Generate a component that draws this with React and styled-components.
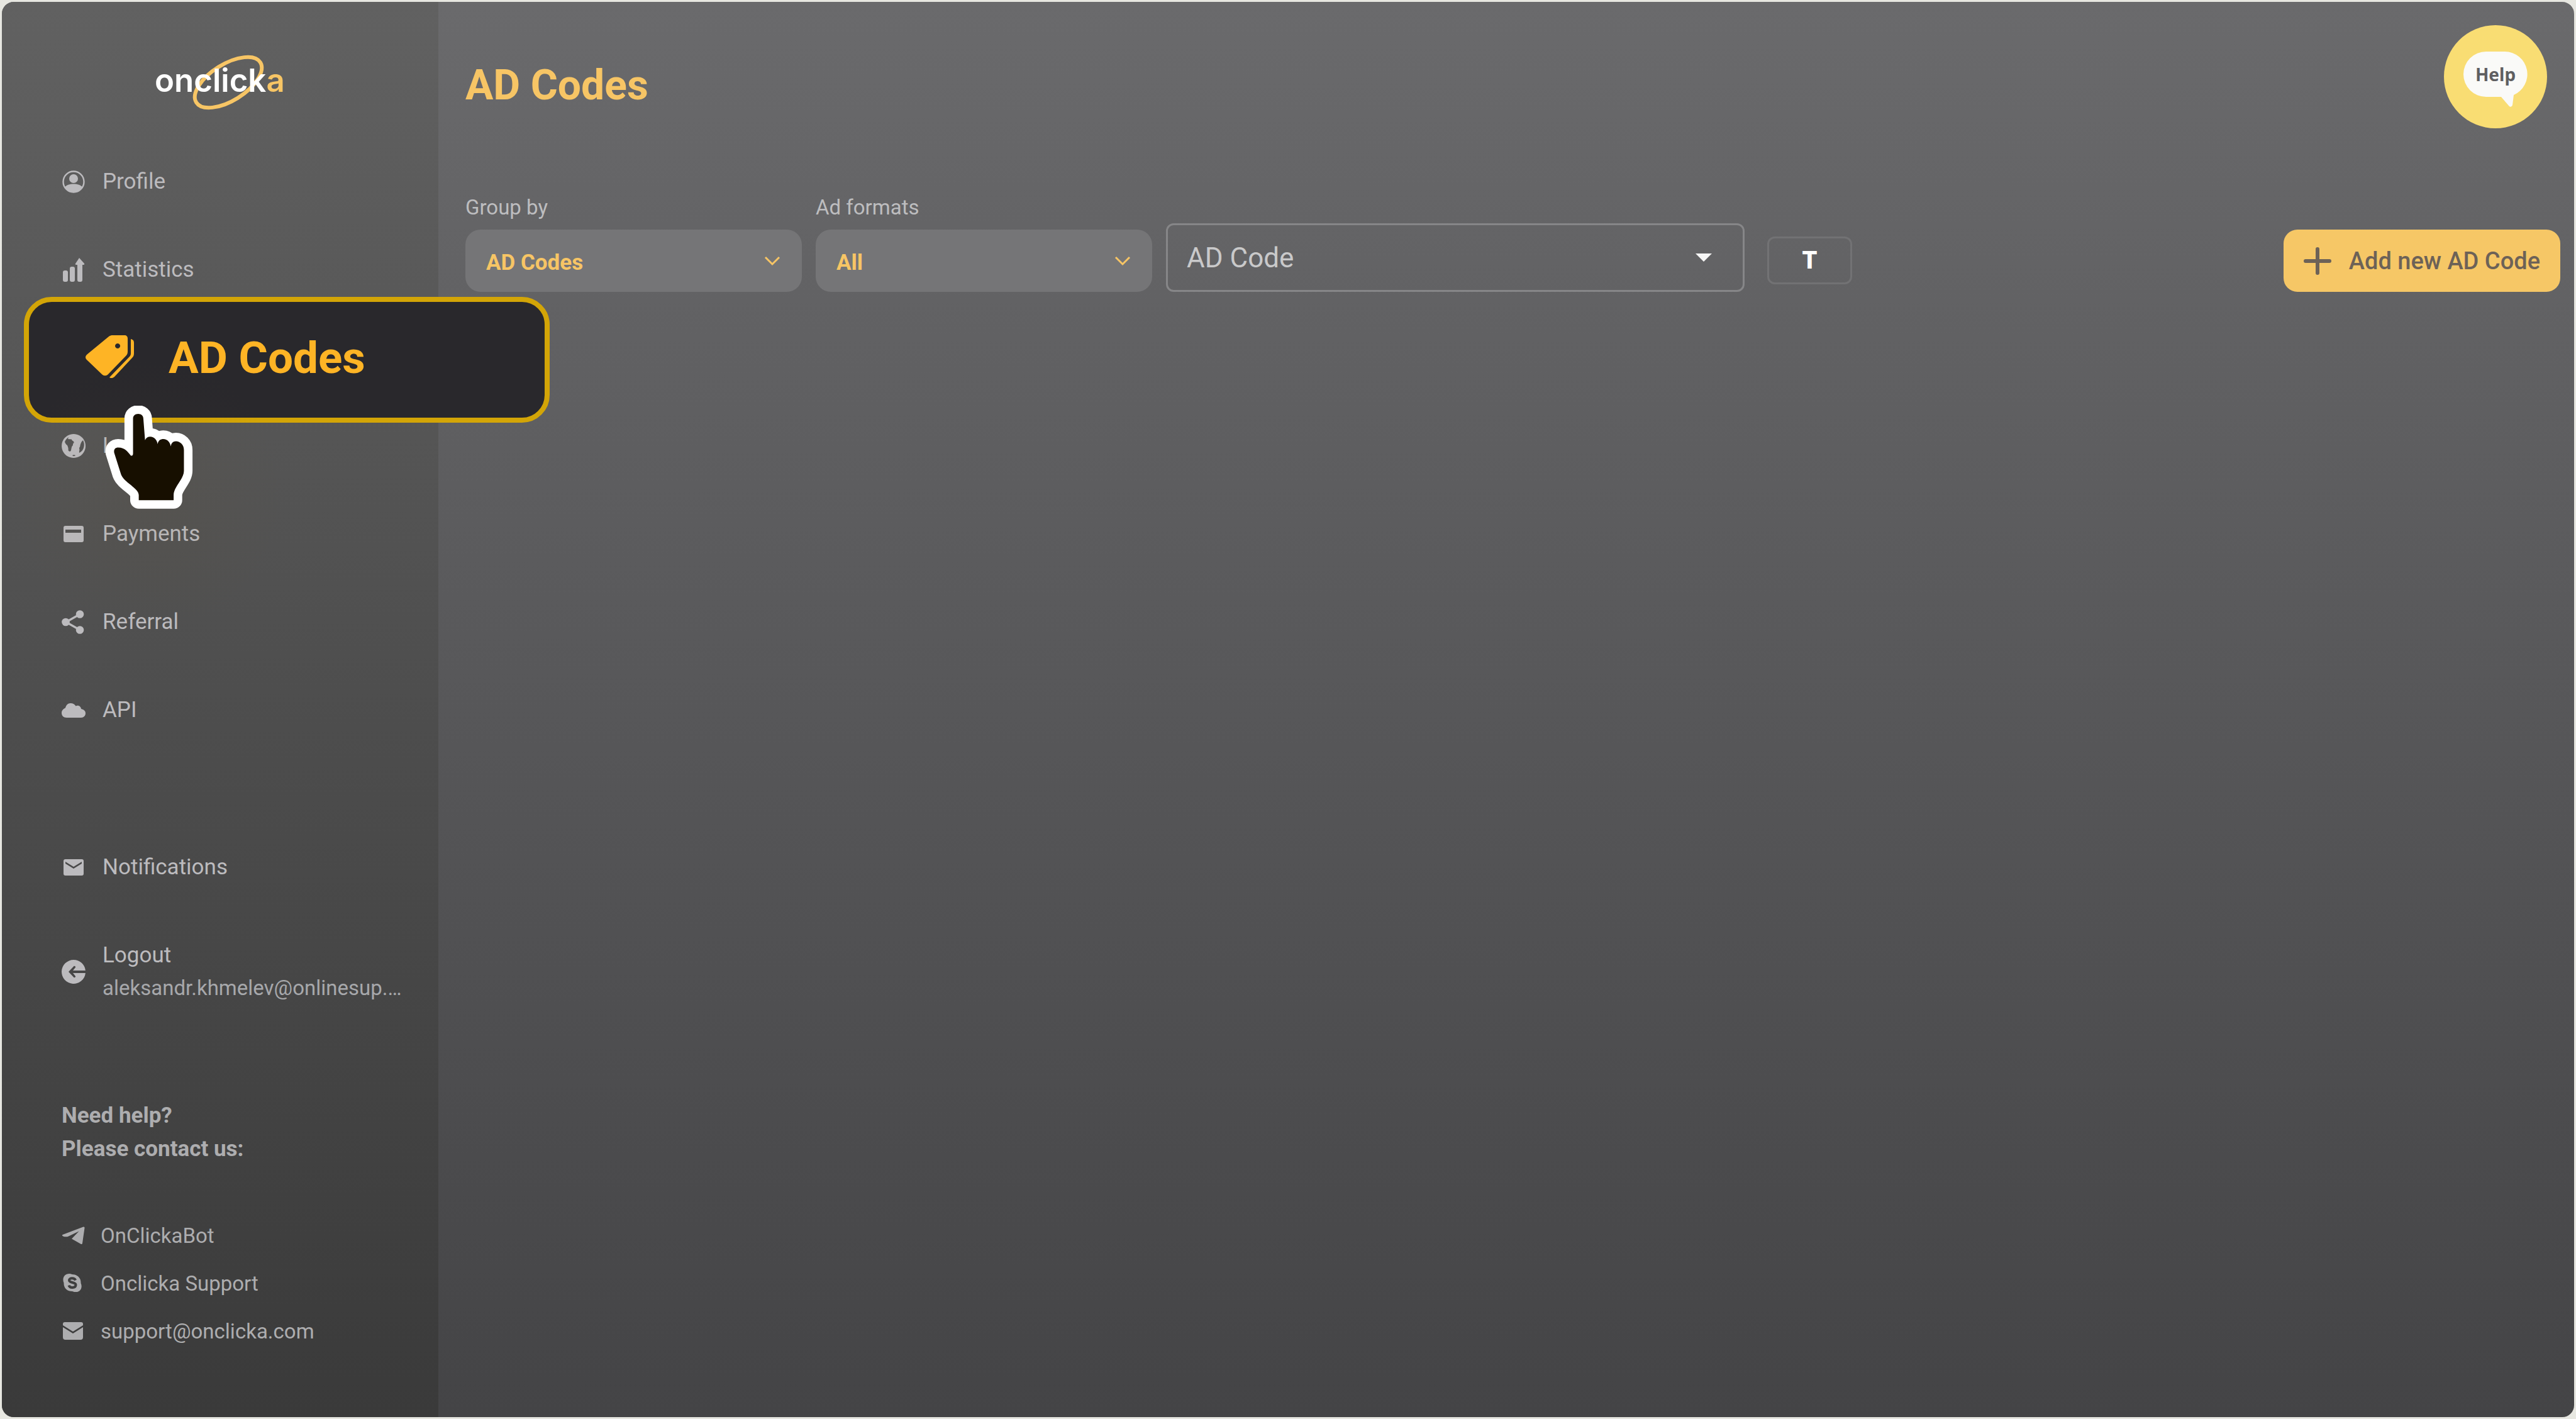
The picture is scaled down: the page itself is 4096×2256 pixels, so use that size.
import React from 'react';
import styled, { createGlobalStyle } from 'styled-components';

const colors = {
	amber: '#f7c565',
	amberBright: '#feb425',
	frame: '#e7e7e1',
	text: '#bcbbbe',
	textDim: '#adadaf'
};

const GlobalStyle = createGlobalStyle`
	* {
		box-sizing: border-box;
	}

	body {
		margin: 0;
		background: ${colors.frame};
		font-family: Roboto, sans-serif;
	}

	button, select {
		font-family: inherit;
	}

	a {
		color: inherit;
		text-decoration: none;
	}
`;

const Page = styled.div`
	display: flex;
	min-height: 100vh;
	border: 3px solid ${colors.frame};
	border-radius: 22px;
	background: linear-gradient(#6a6a6c, #444446);
	overflow: hidden;
`;

const Sidebar = styled.aside`
	flex: 0 0 694px;
	padding: 71px 0 0 95px;
	background: linear-gradient(#616161, #3a3a3a);
	color: ${colors.text};
`;

const Brand = styled.a`
	display: block;
	width: 220px;
	height: 104px;
	margin-left: 143px;
	margin-bottom: 41px;
`;

const NavList = styled.ul`
	list-style: none;
	margin: 0;
	padding: 0;
`;

const NavItem = styled.li`
	position: relative;
	min-height: 140px;
	padding: 44px 0;
`;

const NavLink = styled.a`
	display: flex;
	align-items: center;
	gap: 27px;
	font-size: 35px;
	line-height: 52px;

	small {
		display: block;
		font-size: 33px;
		color: #a7a8ab;
	}
`;

const AccountList = styled(NavList)`
	margin-top: 110px;
`;

const Callout = styled.a`
	position: absolute;
	z-index: 2;
	top: -27px;
	left: -60px;
	width: 836px;
	height: 200px;
	display: flex;
	align-items: center;
	gap: 54px;
	padding: 0 0 8px 90px;
	border: 8px solid #d3a507;
	border-radius: 44px;
	background: #29282c;
	color: ${colors.amberBright};
	font-size: 71px;
	font-weight: 700;
`;

const Glow = styled.div`
	position: absolute;
	z-index: 3;
	top: 70px;
	left: -80px;
	width: 440px;
	height: 440px;
	background: radial-gradient(closest-side, rgba(110, 85, 40, 0.08), transparent);
	pointer-events: none;
`;

const Pointer = styled.svg`
	position: absolute;
	z-index: 4;
	top: 146px;
	left: 69px;
	width: 140px;
	height: 164px;
	pointer-events: none;
`;

const Contact = styled.section`
	margin-top: 106px;
	color: ${colors.textDim};
`;

const ContactTitle = styled.h2`
	margin: 0 0 73px;
	font-size: 35px;
	line-height: 53px;
	font-weight: 700;
`;

const ContactLink = styled.a`
	display: flex;
	align-items: center;
	gap: 24px;
	height: 76px;
	font-size: 33px;
`;

const Main = styled.main`
	flex: 1;
	min-width: 0;
	padding: 37px 22px 0 43px;
`;

const Header = styled.header`
	display: flex;
	justify-content: space-between;
	align-items: center;
	height: 164px;
	margin-bottom: 104px;
	padding-right: 21px;
`;

const Title = styled.h1`
	margin: 0;
	padding-top: 28px;
	font-size: 66px;
	line-height: 76px;
	font-weight: 700;
	color: ${colors.amber};
`;

const HelpButton = styled.button`
	display: flex;
	align-items: center;
	justify-content: center;
	width: 164px;
	height: 164px;
	padding: 10px 0 0;
	border: 0;
	border-radius: 50%;
	background: #f9dd73;
`;

const Filters = styled.form`
	display: flex;
	align-items: flex-end;
	gap: 22px;
`;

const Field = styled.div`
	display: flex;
	flex-direction: column;
	gap: 13px;
	width: 535px;
`;

const FieldLabel = styled.label`
	font-size: 33px;
	line-height: 44px;
	color: #bdbdbf;
`;

const SelectWrap = styled.div`
	position: relative;
	display: flex;
	align-items: center;

	svg {
		position: absolute;
		right: ${props => props.$inset}px;
		pointer-events: none;
	}
`;

const Select = styled.select`
	appearance: none;
	width: 100%;
	height: 99px;
	padding: 6px 33px 0;
	border: 0;
	border-radius: 24px;
	background: #757577;
	color: ${colors.amber};
	font-size: 35px;
	font-weight: 700;
`;

const OutlinedSelect = styled(Select)`
	height: 109px;
	padding: 0 30px;
	border: 3px solid #868688;
	border-radius: 12px;
	background: transparent;
	color: #c9c9ca;
	font-size: 44px;
	font-weight: 400;
`;

const WideField = styled.div`
	width: 920px;
`;

const TextButton = styled.button`
	width: 135px;
	height: 76px;
	margin: 0 0 12px 14px;
	border: 3px solid #727274;
	border-radius: 12px;
	background: transparent;
	color: #fff;
	font-size: 38px;
	font-weight: 900;
`;

const AddButton = styled.button`
	display: flex;
	align-items: center;
	gap: 28px;
	height: 99px;
	margin-left: auto;
	padding: 0 32px;
	border: 0;
	border-radius: 22px;
	background: #f6c766;
	color: #6d6257;
	font-size: 38px;
	font-weight: 500;
`;

function Logo() {
	return <svg width="220" height="104" viewBox="0 0 220 104" role="img" aria-label="onclicka">
		<ellipse cx="122" cy="57" rx="60" ry="29" transform="rotate(-32 122 57)" fill="none" stroke={colors.amber} strokeWidth="6" />
		<text x="5" y="72" fontFamily="Inter, sans-serif" fontSize="51" fontWeight="600" fill="#fff">
			onclick<tspan fill={colors.amber}>a</tspan>
		</text>
	</svg>
}

function Icon({ name }) {
	return <svg width="38" height="38" viewBox="0 0 38 38" fill="currentColor" aria-hidden="true">
		{icons[name]}
	</svg>
}

const icons = {
	profile: <>
		<circle cx="19" cy="19" r="16.5" fill="none" stroke="currentColor" strokeWidth="2.4" />
		<circle cx="19" cy="14" r="7" />
		<path d="M5 28c2-4 8-5.500 14-5.500s12 1.500 14 5.500c-3 5-8 8-14 8s-11-3-14-8z" />
	</>,
	statistics: <>
		<rect x="2" y="20" width="8" height="18" rx="3" />
		<rect x="13" y="14" width="8" height="24" rx="3" />
		<path d="M28 0l8 9c.6 1-.1 2-1 2h-2v24a3 3 0 0 1-3 3h-2a3 3 0 0 1-3-3V11h-2c-1 0-1.600-1-1-2z" />
	</>,
	landing: <path fillRule="evenodd" d="M19 0a19 19 0 1 0 .1 0zM11 5l-1 3 6 .5c0 3 4 2 3.500 5.500-1 1-2 2-1.500 4-3 2-2 6-3.500 9-1.500 1.500-3.500.5-4-1.500.5-3-.5-5-1.500-7.500-2-1-3-3-4-5.500C6 10 8 7 11 5zM34 10c-3 2-3.500 5-4.500 8 0 3-1.500 3-1.500 5 1 3-.5 4 0 7 4-2 6-5 7-8 1.500-5 .5-9-1-12zM17 34c1-1 4-1 5 0-1 1.500-4 1.500-5 0z" />,
	payments: <path fillRule="evenodd" d="M6 6h26a3 3 0 0 1 3 3v20a3 3 0 0 1-3 3H6a3 3 0 0 1-3-3V9a3 3 0 0 1 3-3zm0 6v5h25v-5z" />,
	referral: <>
		<path d="M29 6.500L7 19l22 12.500" fill="none" stroke="currentColor" strokeWidth="3.200" />
		<circle cx="29" cy="6.500" r="6.300" />
		<circle cx="6.500" cy="19" r="6.300" />
		<circle cx="29" cy="31.500" r="6.300" />
	</>,
	api: <path d="M8 31c-5 0-8-3-8-7.500S3 17 6 15.500C7 11 10 8 14 8c4 0 7 2 8.500 4.500 4-2 8 .5 8.500 4.500 4 1 7 3 7 7s-3 7-7 7z" />,
	notifications: <path fillRule="evenodd" d="M6 6h26a3 3 0 0 1 3 3v20a3 3 0 0 1-3 3H6a3 3 0 0 1-3-3V9a3 3 0 0 1 3-3zm0 4v3l13 8 13-8v-3l-13 8z" />,
	logout: <path d="M19 0a19 19 0 1 0 18.900 21H18l4 5c.8 1-1.500 3-2.500 2L11 19l8.500-9c1-1 3.300 1 2.500 2l-4 5h19.900A19 19 0 0 0 19 0z" />,
	telegram: <path d="M1.500 18L34.500 5.500c1.300-.4 2.200.3 2 1.800L33 31.500c-.3 1.500-1.300 2-2.500 1.200L16 24.500l11.500-12L11 20.500c-2 1-5 1-7.500.5-2.500-.8-3.500-2-2-3z" />,
	mail: <>
		<path d="M5 5h26a3 3 0 0 1 3 3v2L18 20 2 10V8a3 3 0 0 1 3-3z" />
		<path d="M2 13l16 10 16-10v16a4 4 0 0 1-4 4H6a4 4 0 0 1-4-4z" />
	</>,
	skype: <>
		<path d="M9 4.500c3-1 5-.5 7.500.5C25 5 31 11 30.500 19c3 6 0 14-7.500 14-2 0-4 0-6-1C9 32 3 27 3.500 18.500 1 13 3 6 9 4.500z" />
		<path d="M22 14.500c-1.500-4.500-10-4-10 0 0 4.500 11 2.500 10.500 7.500-.5 5-9.500 5.500-11 .5" fill="none" stroke="#3f3f3f" strokeWidth="4" />
	</>
};

function NavEntry({ icon, children }) {
	return <NavItem>
		<NavLink href="#"><Icon name={icon} /><span>{children}</span></NavLink>
	</NavItem>
}

/**
 * the open section of the menu, lifted out of the sidebar with the hand
 * pointing at it
 */
function ActiveEntry() {
	return <NavItem>
		<Callout href="#" aria-current="page">
			<svg width="78" height="70" viewBox="0 0 78 70" fill="currentColor" aria-hidden="true">
				<path fillRule="evenodd" d="M37 2c2-1.500 4-2 6-2h19c3 0 5 2 5 5v21c0 3-1 5-3 7L36 62c-3 3-7 3-10 0L3 40c-4-3-4-7 0-10zM51 13a4 4 0 1 0 .1 0z" />
				<path d="M72 6c4 1 5 3 5 6v17c0 3-1 5-3 7L46 66c-2 2-6 3-8 1l32-33c1-1 2-3 2-5z" />
			</svg>
			AD Codes
		</Callout>
		<Glow />
		<Pointer viewBox="183 708 154 180" aria-hidden="true">
			<path
				d="M232 730c0-5 4-8 9-8s9 3 9 8l3 38c2-4 5-6 9-6 7 0 12 6 13 13 1-6 5-9 10-9 7 0 12 6 13 13 1-6 4-9 9-9 7 0 14 6 14 15v37c0 14-18 28-18 42v9h-61v-9c0-12-26-22-31-36l-12-38c-1-6 2-9 7-9 12 0 17 8 22 14 3 1 4-1 4-4z"
				fill="#170f00"
				stroke="#fff"
				strokeWidth="30"
				strokeLinejoin="round"
				paintOrder="stroke"
			/>
		</Pointer>
	</NavItem>
}

function App() {
	return <Page>
		<GlobalStyle />
		<Sidebar>
			<Brand href="#"><Logo /></Brand>
			<nav>
				<NavList>
					<NavEntry icon="profile">Profile</NavEntry>
					<NavEntry icon="statistics">Statistics</NavEntry>
					<ActiveEntry />
					<NavEntry icon="landing">Lo</NavEntry>
					<NavEntry icon="payments">Payments</NavEntry>
					<NavEntry icon="referral">Referral</NavEntry>
					<NavEntry icon="api">API</NavEntry>
				</NavList>
				<AccountList>
					<NavEntry icon="notifications">Notifications</NavEntry>
					<NavEntry icon="logout">Logout<small>aleksandr.khmelev@onlinesup.…</small></NavEntry>
				</AccountList>
			</nav>
			<Contact>
				<ContactTitle>Need help?<br />Please contact us:</ContactTitle>
				<ContactLink href="#"><Icon name="telegram" />OnClickaBot</ContactLink>
				<ContactLink href="#"><Icon name="skype" />Onclicka Support</ContactLink>
				<ContactLink href="#"><Icon name="mail" />support@onclicka.com</ContactLink>
			</Contact>
		</Sidebar>
		<Main>
			<Header>
				<Title>AD Codes</Title>
				<HelpButton type="button">
					<svg width="102" height="90" viewBox="0 0 102 90">
						<path d="M36 0h30a36 36 0 0 1 14 69l-2 16c-1 3-4 4-6 1l-12-14H36a36 36 0 0 1 0-72z" fill="#fafaf8" />
						<text x="51" y="47" textAnchor="middle" fontFamily="Noto Sans, sans-serif" fontSize="28" fontWeight="700" fill="#5f5f61">Help</text>
					</svg>
				</HelpButton>
			</Header>
			<Filters>
				<Field>
					<FieldLabel htmlFor="group">Group by</FieldLabel>
					<SelectWrap $inset={34}>
						<Select id="group"><option>AD Codes</option></Select>
						<svg width="26" height="16" viewBox="0 0 26 16"><path d="M2 2l11 11L24 2" fill="none" stroke={colors.amber} strokeWidth="3" /></svg>
					</SelectWrap>
				</Field>
				<Field>
					<FieldLabel htmlFor="formats">Ad formats</FieldLabel>
					<SelectWrap $inset={34}>
						<Select id="formats"><option>All</option></Select>
						<svg width="26" height="16" viewBox="0 0 26 16"><path d="M2 2l11 11L24 2" fill="none" stroke={colors.amber} strokeWidth="3" /></svg>
					</SelectWrap>
				</Field>
				<WideField>
					<SelectWrap $inset={52}>
						<OutlinedSelect aria-label="AD Code"><option>AD Code</option></OutlinedSelect>
						<svg width="26" height="13" viewBox="0 0 26 13"><path d="M0 0h26L13 13z" fill="#f7f7f7" /></svg>
					</SelectWrap>
				</WideField>
				<TextButton type="button">T</TextButton>
				<AddButton type="button">
					<svg width="44" height="44" viewBox="0 0 44 44"><path d="M22 3v38M3 22h38" stroke="currentColor" strokeWidth="6" strokeLinecap="round" /></svg>
					Add new AD Code
				</AddButton>
			</Filters>
		</Main>
	</Page>
}

export default App;
